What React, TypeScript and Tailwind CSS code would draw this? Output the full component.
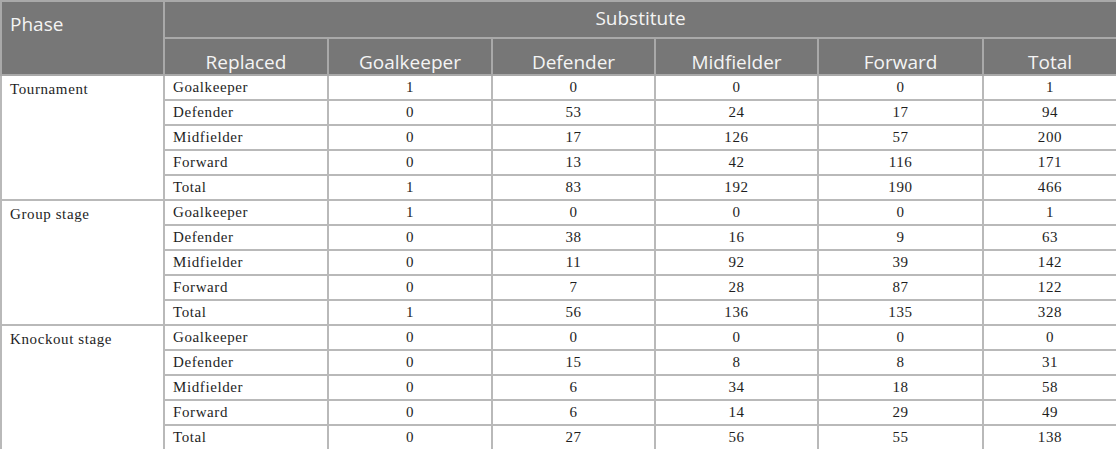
const cols = ["Goalkeeper", "Defender", "Midfielder", "Forward", "Total"];
const roles = ["Goalkeeper", "Defender", "Midfielder", "Forward", "Total"];

type Phase = { name: string; rows: number[][] };

const phases: Phase[] = [
  {
    name: "Tournament",
    rows: [
      [1, 0, 0, 0, 1],
      [0, 53, 24, 17, 94],
      [0, 17, 126, 57, 200],
      [0, 13, 42, 116, 171],
      [1, 83, 192, 190, 466],
    ],
  },
  {
    name: "Group stage",
    rows: [
      [1, 0, 0, 0, 1],
      [0, 38, 16, 9, 63],
      [0, 11, 92, 39, 142],
      [0, 7, 28, 87, 122],
      [1, 56, 136, 135, 328],
    ],
  },
  {
    name: "Knockout stage",
    rows: [
      [0, 0, 0, 0, 0],
      [0, 15, 8, 8, 31],
      [0, 6, 34, 18, 58],
      [0, 6, 14, 29, 49],
      [0, 27, 56, 55, 138],
    ],
  },
];

const head = "border-2 border-[#a9a9a9] bg-[#777777] text-[#f4f4f4] font-normal leading-none";
const cell = "border-2 border-[#b9b9b9] h-[25px] p-0 leading-none";

export default function App() {
  return (
    <div className="w-[1116px] h-[449px] bg-white overflow-hidden">
      <table
        className="table-fixed border-collapse w-[1116px] text-[15px] tracking-[0.6px] text-[#1e1e1e]"
        style={{ fontFamily: '"Liberation Serif", serif' }}
      >
        <colgroup>
          <col className="w-[163px]" />
          <col className="w-[164px]" />
          <col className="w-[164px]" />
          <col className="w-[163px]" />
          <col className="w-[163px]" />
          <col className="w-[165px]" />
          <col className="w-[134px]" />
        </colgroup>
        <thead className="font-['Open_Sans',sans-serif] text-[19px] tracking-normal">
          <tr className="h-[37px]">
            <th rowSpan={2} className={`${head} text-left align-top pl-2 pt-[13px]`}>
              Phase
            </th>
            <th colSpan={6} className={`${head} align-middle pb-[3px]`}>
              Substitute
            </th>
          </tr>
          <tr className="h-[37px]">
            <th className={`${head} align-bottom pb-[2px]`}>Replaced</th>
            {cols.map((c) => (
              <th key={c} className={`${head} align-bottom pb-[2px]`}>
                {c}
              </th>
            ))}
          </tr>
        </thead>
        <tbody>
          {phases.map((p) =>
            p.rows.map((r, i) => (
              <tr key={p.name + i}>
                {i === 0 && (
                  <td rowSpan={5} className={`${cell} align-top pl-2 pt-[6px]`}>
                    {p.name}
                  </td>
                )}
                <td className={`${cell} pl-2`}>{roles[i]}</td>
                {r.map((v, j) => (
                  <td key={j} className={`${cell} text-center`}>
                    {v}
                  </td>
                ))}
              </tr>
            ))
          )}
        </tbody>
      </table>
    </div>
  );
}
